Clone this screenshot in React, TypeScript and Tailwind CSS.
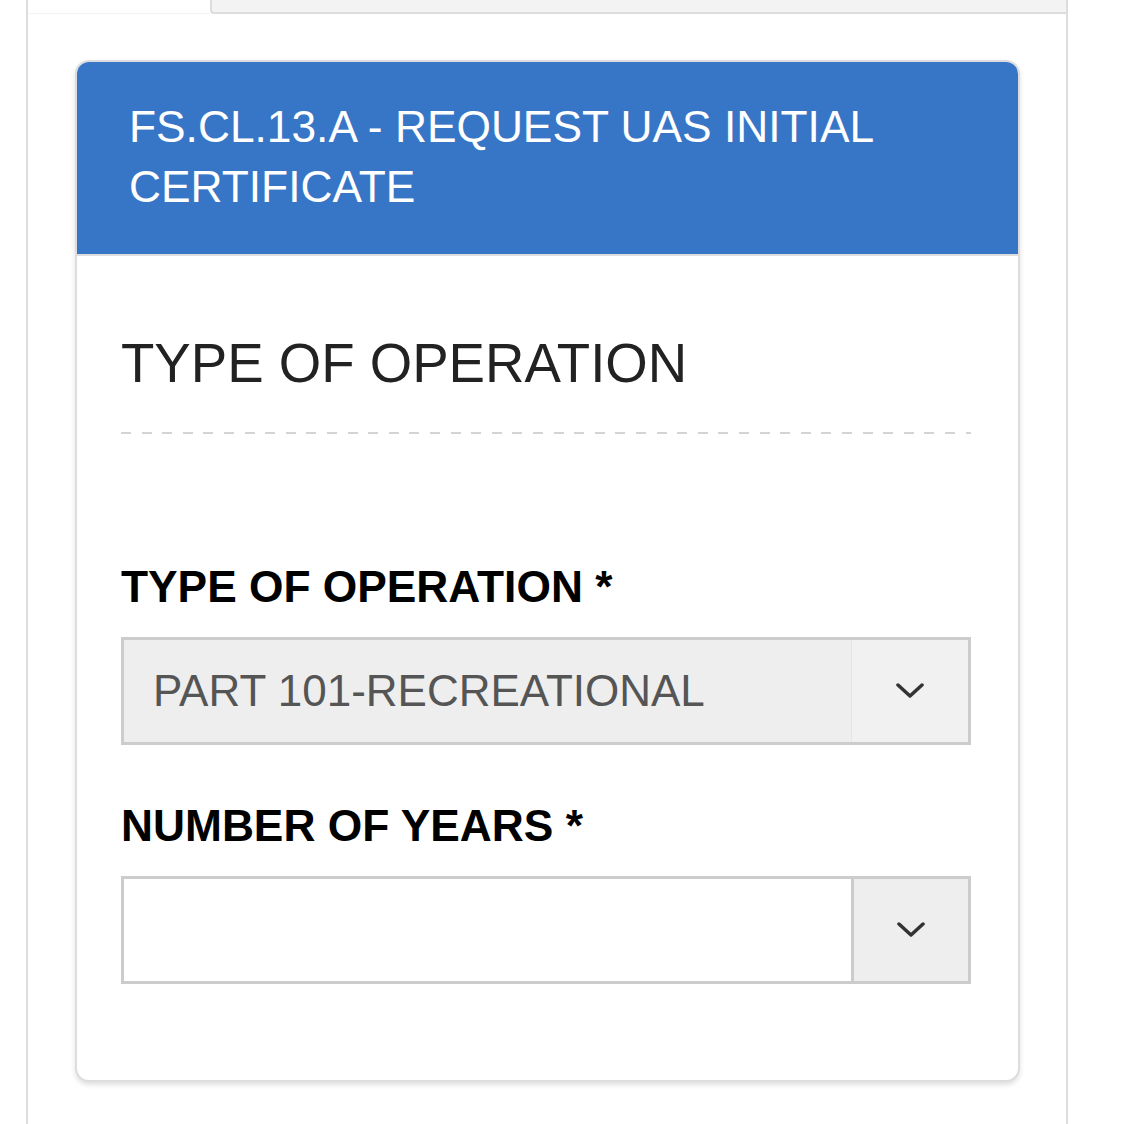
const font = { fontFamily: '"Liberation Sans", Arial, Helvetica, sans-serif' };

function Chevron() {
    return (
        <svg width="28" height="16" viewBox="0 0 28 16" fill="none" className="text-[#333]">
            <path d="M2 2 L14 13 L26 2" stroke="currentColor" strokeWidth="3.5" strokeLinecap="round" strokeLinejoin="round" />
        </svg>
    );
}

interface SelectBoxProps {
    value?: string;
    filled?: boolean;
}

function SelectBox({ value, filled }: SelectBoxProps) {
    return (
        <div
            className={`flex h-[108px] border-[3px] border-[#cccccc] ${filled ? 'bg-[#eeeeee]' : 'bg-white'}`}
        >
            <div className="flex flex-1 items-center pl-[29px] text-[44px] text-[#555555]">
                {value}
            </div>
            <div
                className={`flex w-[117px] items-center justify-center ${
                    filled ? 'bg-[#f1f1f1] border-l border-[#e6e6e6]' : 'bg-[#eeeeee] border-l-[3px] border-[#cccccc]'
                }`}
            >
                <Chevron />
            </div>
        </div>
    );
}

export default function App() {
    return (
        <div className="min-h-[1124px] bg-white" style={font}>
            <div className="ml-[26px] w-[1042px] min-h-[1124px] border-x-2 border-[#dddddd]">
                {/* tab strip */}
                <div className="flex h-[14px]">
                    <div className="w-[182px] border-b border-[#f3f3f3]" />
                    <div className="flex-1 rounded-bl-[4px] border-l-2 border-b-2 border-[#dddddd] bg-[#f3f3f3]" />
                </div>

                {/* card */}
                <div className="ml-[47px] mr-[46px] mt-[46px] overflow-hidden rounded-[14px] border-2 border-[#dddddd] bg-white shadow-[0_3px_5px_rgba(0,0,0,0.12)]">
                    <div className="border-b-2 border-[#dddddd] bg-[#3776c6] px-[52px] pt-[35px] pb-[37px] text-[44.3px] leading-[60px] text-white">
                        FS.CL.13.A - REQUEST UAS INITIAL CERTIFICATE
                    </div>

                    <div className="pl-[44px] pr-[47px] pt-[78px] pb-[96px]">
                        <h2 className="text-[54.6px] leading-[60px] text-[#222222]">TYPE OF OPERATION</h2>
                        <div className="mt-[38px] h-[2px] bg-[repeating-linear-gradient(to_right,#d4d4d4_0,#d4d4d4_10px,transparent_10px,transparent_20.6px)]" />

                        <label className="mt-[128px] block text-[44.3px] font-bold leading-[50px] text-black">
                            TYPE OF OPERATION *
                        </label>
                        <div className="mt-[25px]">
                            <SelectBox value="PART 101-RECREATIONAL" filled />
                        </div>

                        <label className="mt-[56px] block text-[44.3px] font-bold leading-[50px] text-black">
                            NUMBER OF YEARS *
                        </label>
                        <div className="mt-[25px]">
                            <SelectBox />
                        </div>
                    </div>
                </div>
            </div>
        </div>
    );
}
